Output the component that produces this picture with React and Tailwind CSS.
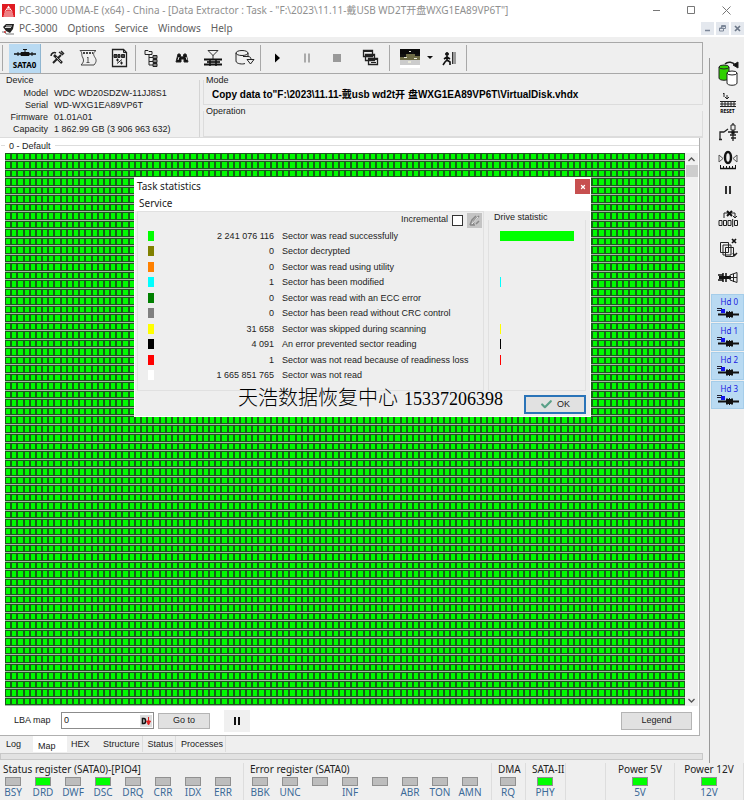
import { Check, X } from "lucide-react";

const COLS = 110;
const ROWS = 65;
const MAP_W = 680;
const MAP_H = 552;

const STATS = [
  { swatch: "bg-[#00ff00]", count: "2 241 076 116", label: "Sector was read successfully", share: 100 },
  { swatch: "bg-[#808000]", count: "0", label: "Sector decrypted", share: 0 },
  { swatch: "bg-[#ff8000]", count: "0", label: "Sector was read using utility", share: 0 },
  { swatch: "bg-[#00ffff]", count: "1", label: "Sector has been modified", share: 2 },
  { swatch: "bg-[#008000]", count: "0", label: "Sector was read with an ECC error", share: 0 },
  { swatch: "bg-[#808080]", count: "0", label: "Sector has been read without CRC control", share: 0 },
  { swatch: "bg-[#ffff00]", count: "31 658", label: "Sector was skipped during scanning", share: 2 },
  { swatch: "bg-black", count: "4 091", label: "An error prevented sector reading", share: 2 },
  { swatch: "bg-[#ff0000]", count: "1", label: "Sector was not read because of readiness loss", share: 2 },
  { swatch: "bg-white", count: "1 665 851 765", label: "Sector was not read", share: 0 },
];

const DEVICE = [
  ["Model", "WDC WD20SDZW-11JJ8S1"],
  ["Serial", "WD-WXG1EA89VP6T"],
  ["Firmware", "01.01A01"],
  ["Capacity", "1 862.99 GB (3 906 963 632)"],
];

const STATUS_BITS = [
  ["BSY", false],
  ["DRD", true],
  ["DWF", false],
  ["DSC", true],
  ["DRQ", false],
  ["CRR", false],
  ["IDX", false],
  ["ERR", false],
];

const ERROR_BITS = [
  ["BBK", false],
  ["UNC", false],
  ["", false],
  ["INF", false],
  ["", false],
  ["ABR", false],
  ["TON", false],
  ["AMN", false],
];

const TABS = [
  { name: "Log", className: "w-[31px] pl-1" },
  { name: "Map", className: "w-[34px] bg-white pt-[2px] pl-[5px]" },
  { name: "HEX", className: "w-[31px] pl-1" },
  { name: "Structure", className: "border-r border-[#ddd] pr-[2px] pl-[5px]" },
  { name: "Status", className: "border-r border-[#ddd] pr-[2px] pl-[5px]" },
  { name: "Processes", className: "border-r border-[#ddd] pr-[2px] pl-[5px]" },
];

function cellPath(inset) {
  let d = "";
  for (let r = 0; r < ROWS; r++) {
    const y0 = Math.round((r * MAP_H) / ROWS);
    const y1 = Math.round(((r + 1) * MAP_H) / ROWS) - 1;
    for (let c = 0; c < COLS; c++) {
      const x0 = Math.round((c * MAP_W) / COLS);
      const x1 = Math.round(((c + 1) * MAP_W) / COLS);
      const w = x1 - x0 - inset * 2;
      const h = y1 - y0 - inset * 2;
      d += `M${x0 + inset} ${y0 + inset}h${w}v${h}h${-w}z`;
    }
  }
  return d;
}

const OUTER = cellPath(0);
const INNER = cellPath(1);

function SectorMap() {
  return (
    <svg
      viewBox={`0 0 ${MAP_W} ${MAP_H}`}
      preserveAspectRatio="none"
      shapeRendering="crispEdges"
      className="h-full w-full"
    >
      <rect width={MAP_W} height={MAP_H} fill="#a9b4a9" />
      <path d={OUTER} fill="#1a5c1a" />
      <path d={INNER} fill="#00fa00" />
    </svg>
  );
}

function Icon({ children, w = 22, h = 22 }) {
  return (
    <svg width={w} height={h} viewBox={`0 0 ${w} ${h}`} fill="none" stroke="#222" strokeWidth="1">
      {children}
    </svg>
  );
}

function ToolButton({ label, children, className = "w-[30px]" }) {
  return (
    <button type="button" aria-label={label} className={`flex h-[29px] shrink-0 items-center justify-center ${className}`}>
      {children}
    </button>
  );
}

function Separator() {
  return <div className="mx-px h-[26px] w-px bg-[#a8a8a8]" />;
}

function Logo() {
  return (
    <svg width="13" height="13" viewBox="0 0 13 13">
      <rect width="13" height="13" fill="#e01b22" />
      <path d="M6.500 1.500 10 7H3z" fill="#fff" />
      <path d="M5 5h3M4 6.500h5" stroke="#e01b22" strokeWidth=".8" />
      <path d="M2.500 8h8M2 10h9M1.500 12h10" stroke="#fff" strokeWidth=".9" />
    </svg>
  );
}

function TitleBar() {
  return (
    <header className="flex h-5 items-center bg-white pl-[2px] text-[#8f8f8f]">
      <Logo />
      <h1 className="ml-1 whitespace-nowrap text-[10px]">
        PC-3000 UDMA-E (x64) - China - [Data Extractor : Task - "F:\2023\11.11-戴USB WD2T开盘WXG1EA89VP6T"]
      </h1>
      <div className="ml-auto flex">
        <button type="button" aria-label="Minimize" className="flex w-[35px] justify-center">
          <Icon w={9} h={9}><path d="M1 4.500h7" stroke="#777" /></Icon>
        </button>
        <button type="button" aria-label="Maximize" className="flex w-[35px] justify-center">
          <Icon w={9} h={9}><path d="M.5 .5h7v7h-7z" stroke="#777" /></Icon>
        </button>
        <button type="button" aria-label="Close" className="flex w-[35px] justify-center">
          <Icon w={9} h={9}><path d="M.5 .5l8 8M8.500 .5l-8 8" stroke="#777" /></Icon>
        </button>
      </div>
    </header>
  );
}

function MenuBar() {
  return (
    <nav className="flex h-[17px] items-center bg-white pl-[2px] text-[10px] text-[#606060]">
      <svg width="13" height="12" viewBox="0 0 13 12">
        <path d="M1 4 4 1h8l-1 5-3 4-4-2z" fill="#222" />
        <path d="M3 4.500h6M4 3h6" stroke="#ddd" />
        <path d="M0 9h3l1 2h8" stroke="#777" fill="none" />
        <circle cx="3" cy="9" r="1" fill="#c33" />
      </svg>
      <div className="ml-1 flex gap-[10px]">
        <button type="button">PC-3000</button>
        <button type="button">Options</button>
        <button type="button">Service</button>
        <button type="button">Windows</button>
        <button type="button">Help</button>
      </div>
      <div className="ml-auto flex gap-[2px]">
        <button type="button" aria-label="Minimize child" className="flex h-[13px] w-[13px] items-center justify-center bg-[#e4e8ee]">
          <Icon w={7} h={7}><path d="M1 5.500h5" stroke="#7c8798" strokeWidth="1.500" /></Icon>
        </button>
        <button type="button" aria-label="Restore child" className="flex h-[13px] w-[13px] items-center justify-center bg-[#e4e8ee]">
          <Icon w={7} h={7}><path d="M2.500 3V.5h4v3H5M.5 3h4v3h-4zM.5 3.500h4M2.500 1.500h4" stroke="#7c8798" /></Icon>
        </button>
        <button type="button" aria-label="Close child" className="flex h-[13px] w-[13px] items-center justify-center bg-[#e4e8ee]">
          <Icon w={7} h={7}><path d="M1 1l5 5M6 1L1 6" stroke="#6c7788" strokeWidth="1.700" /></Icon>
        </button>
      </div>
    </nav>
  );
}

function Toolbar() {
  return (
    <div className="flex h-8 items-center overflow-hidden border border-l-0 border-[#a8a8a8] pl-[2px]">
      <div className="mr-[6px] h-[26px] w-px bg-[#a8a8a8]" />
      <button type="button" className="flex h-[29px] w-8 shrink-0 flex-col items-center justify-center border-r border-[#8fb5d0] bg-[#b9daf2] text-[8px] leading-[9px] font-bold text-black">
        <svg width="22" height="12" viewBox="0 0 22 12">
          <path d="M0 6h22" stroke="#111" strokeWidth="1.500" />
          <path d="M4 4v4M7 4.500h8v3H7zM18 4v4M11 1v3" stroke="#111" fill="#111" />
          <path d="M9 1.500h4" stroke="#111" />
        </svg>
        SATA0
      </button>
      <ToolButton label="Utility" className="w-[31px]">
        <Icon>
          <path d="M8 8l8 8" strokeWidth="2.500" />
          <path d="M15 8 7 16" strokeWidth="2" />
          <path d="M5 9c0-3 3-4 5-3M13 5l4 3M15 4l3 3" strokeWidth="1.500" />
          <path d="M10 10l5 5" stroke="#eee" strokeWidth=".7" />
        </Icon>
      </ToolButton>
      <ToolButton label="Script" className="w-[31px]">
        <Icon>
          <path d="M3 3.500h16c-3 2-3 4-1 7s1 5-1 7.500H4c3-3 3-5 1.500-8C4 8 6 6 3 3.500z" stroke="#444" />
          <path d="M6 6h10" strokeWidth="2" strokeDasharray="2 1" stroke="#444" />
          <path d="M11 10v5M10 10.500h1M9.500 15.500h3" stroke="#555" />
        </Icon>
      </ToolButton>
      <ToolButton label="Sector editor" className="w-[31px]">
        <Icon>
          <path d="M4.500 2.500h11l3 3v14h-14z" strokeWidth="1.300" />
          <path d="M15.500 2.500v3h3" />
          <path d="M6 7.500h3v3H6zM10 7.500h2v3h-2zM13.500 7.500h3v3h-3z" fill="#444" />
          <path d="M9 16.500l5-4" />
          <path d="M9 12h1v2H9zM13 15h1v2h-1z" fill="#222" />
        </Icon>
      </ToolButton>
      <Separator />
      <ToolButton label="Object tree">
        <Icon>
          <path d="M4 3.500h3l1 1h3v3H4zM8 7.500V18h4M8 10.500h4M8 14.500h4" />
          <path d="M12 8.500h4v3h-4zM12 12.500h4v3h-4zM12 16.500h4v3h-4z" fill="#888" />
        </Icon>
      </ToolButton>
      <ToolButton label="Search">
        <Icon w={16} h={16}>
          <path d="M4 4h2l1 3h2l1-3h2l2 8h-4V9H7v3H2z" fill="#111" />
          <path d="M4 10l1-3M12 7l1 3" stroke="#ddd" />
        </Icon>
      </ToolButton>
      <ToolButton label="Compare" className="w-[32px]">
        <Icon>
          <path d="M6 3.500h10l-5 5zM11 8v4" stroke="#333" />
          <path d="M2 12.500h18M2 17.500h18" stroke="#111" strokeWidth="2" />
          <path d="M5 15h13" strokeWidth="2" stroke="#333" />
          <path d="M8 12v7M14 12v7" stroke="#111" strokeWidth="1.500" />
        </Icon>
      </ToolButton>
      <ToolButton label="Copy data">
        <Icon>
          <ellipse cx="9" cy="6" rx="6" ry="2.500" />
          <path d="M3 6v8c0 3 7 3.500 9 2.500M15 6v3M10 9.500h5c2 0 3 1 3 3" />
          <path d="M14 12.500h7l-3.500 4.500z" fill="#eee" />
        </Icon>
      </ToolButton>
      <Separator />
      <ToolButton label="Start">
        <Icon w={8} h={10}><path d="M2 .5v9l5-4.500z" fill="#000" stroke="none" /></Icon>
      </ToolButton>
      <ToolButton label="Pause">
        <Icon w={8} h={10}><path d="M2 .5v9M6 .5v9" stroke="#aaa" strokeWidth="2" /></Icon>
      </ToolButton>
      <ToolButton label="Stop">
        <Icon w={8} h={8}><path d="M0 0h8v8H0z" fill="#999" stroke="none" /></Icon>
      </ToolButton>
      <ToolButton label="Windows" className="w-9">
        <Icon>
          <path d="M4.500 3.500h9v6h-9zM6.500 7.500h9v6h-9zM9.500 11.500h9v6h-9z" fill="#eee" strokeWidth="1.300" />
          <path d="M4 4h10M6 8h10M9 12h10" strokeWidth="2" />
          <path d="M12 15.500h5" />
        </Icon>
      </ToolButton>
      <Separator />
      <ToolButton label="Map view" className="ml-1 w-[30px]">
        <svg width="20" height="19" viewBox="0 0 20 19" shapeRendering="crispEdges">
          <rect width="20" height="19" fill="#fff" />
          <rect width="20" height="6" fill="#0a0a0a" />
          <rect y="5" width="20" height="6" fill="#6d6b45" />
          <path d="M0 5h6v3H0zM12 3h2v2h-2zM15 5h5v2h-5z" fill="#111" />
          <path d="M0 11h20v5H0z" fill="#ccc" />
          <path d="M9 2h2v1H9zM4 8h3v1H4zM14 9h3v1h-3zM8 12h3v2H8z" fill="#e8e8d8" />
        </svg>
      </ToolButton>
      <ToolButton label="Map view options" className="w-[10px]">
        <Icon w={6} h={4}><path d="M0 0h6L3 3z" fill="#111" stroke="none" /></Icon>
      </ToolButton>
      <ToolButton label="Exit">
        <Icon w={18} h={18}>
          <circle cx="6" cy="5" r="1.500" fill="#111" />
          <path d="M6 7v4l3 2v3M6 11l-2 2-2 3M6 8 3 10M6 8l3 2" stroke="#111" strokeWidth="1.600" />
          <path d="M11 3h4v12h-4z" fill="#999" stroke="none" />
          <path d="M11.500 3v12" stroke="#333" />
        </Icon>
      </ToolButton>
      <Separator />
    </div>
  );
}

function InfoPanels() {
  return (
    <div className="flex h-[64px] gap-[3px] border-b border-[#dcdcdc] font-['Liberation_Sans','Noto_Sans_CJK_SC',sans-serif] text-[9px] leading-3 text-[#222]">
      <fieldset className="w-[200px] shrink-0 border-r border-[#d4d4d4]">
        <legend className="ml-[6px]">Device</legend>
        <dl className="grid grid-cols-[48px_1fr] gap-x-[6px] pt-px">
          {DEVICE.map(([name, value]) => (
            <div key={name} className="contents">
              <dt className="text-right">{name}</dt>
              <dd className="whitespace-nowrap">{value}</dd>
            </div>
          ))}
        </dl>
      </fieldset>
      <div className="flex min-w-0 flex-1 flex-col">
        <fieldset className="h-[31px] border border-t-0 border-[#dcdcdc]">
          <legend className="ml-[2px]">Mode</legend>
          <p className="ml-2 truncate pt-[3px] text-[10px] font-bold text-black">
            Copy data to"F:\2023\11.11-戴usb wd2t开 盘WXG1EA89VP6T\VirtualDisk.vhdx
          </p>
        </fieldset>
        <fieldset className="flex-1 border border-t-0 border-[#dcdcdc]">
          <legend className="ml-[2px]">Operation</legend>
        </fieldset>
      </div>
    </div>
  );
}

function TaskDialog() {
  return (
    <section
      role="dialog"
      aria-label="Task statistics"
      className="absolute top-[39px] left-[134px] h-[240px] w-[457px] border border-white bg-[#eee]"
    >
      <div className="flex h-[17px] items-center justify-between bg-white pl-[2px] font-['Noto_Sans',sans-serif] text-[10px] text-[#222]">
        <h2>Task statistics</h2>
        <button type="button" aria-label="Close dialog" className="flex h-[15px] w-[15px] items-center justify-center bg-[#c75050] text-white">
          <X size={6} strokeWidth={5} />
        </button>
      </div>
      <div className="flex h-4 items-center bg-white pl-1 font-['Noto_Sans',sans-serif] text-[10px] text-[#222]">
        <button type="button">Service</button>
      </div>
      <div className="flex h-[180px] gap-1 pr-1 pl-[2px]">
        <div className="flex-1 border border-[#e0e0e0]">
          <div className="flex h-4 items-center justify-end pr-px">
            <label htmlFor="incremental" className="mr-1">Incremental</label>
            <input id="incremental" type="checkbox" className="mr-1 h-[11px] w-[11px] appearance-none border border-[#333] bg-white" />
            <button type="button" aria-label="Reset counters" className="flex h-[15px] w-[15px] items-center justify-center bg-[#c4c4c4]">
              <Icon w={13} h={13}>
                <path d="M2 11l2-5 4-4M5 11l1-4 5-5M2 11h5M8 10l3-3" stroke="#888" strokeWidth="1.500" />
                <path d="M4 10l6-7" stroke="#eee" />
              </Icon>
            </button>
          </div>
          <table className="h-[155px] w-full table-fixed border-collapse leading-3">
            <colgroup>
              <col className="w-[30px]" />
              <col className="w-[106px]" />
              <col />
            </colgroup>
            <tbody>
              {STATS.map((row) => (
                <tr key={row.label}>
                  <td className="p-0 pl-[10px]">
                    <div className={`h-[10px] w-[6px] ${row.swatch}`} />
                  </td>
                  <td className="p-0 text-right">{row.count}</td>
                  <td className="p-0 pl-2 whitespace-nowrap">{row.label}</td>
                </tr>
              ))}
            </tbody>
          </table>
        </div>
        <fieldset className="w-[98px] border-r border-b border-l border-[#e0e0e0]">
          <legend className="ml-1 h-[17px] px-px leading-[13px]">Drive statistic</legend>
          <div className="grid h-[155px] grid-rows-10 items-center pl-[11px]">
            {STATS.map((row) => (
              <div key={row.label} className="w-[74px]">
                <div className={`h-[10px] ${row.swatch}`} style={{ width: `${row.share}%` }} />
              </div>
            ))}
          </div>
        </fieldset>
      </div>
      <div className="flex items-start justify-end pr-1">
        <p className="mr-[21px] flex items-baseline text-black">
          <span className="font-['Noto_Sans_CJK_SC',sans-serif] text-[20px] leading-3 font-light">天浩数据恢复中心</span>
          <span className="ml-[6px] font-['Liberation_Serif',serif] text-[18px] leading-3">15337206398</span>
        </p>
        <button type="button" className="mt-1 flex h-[19px] w-[62px] items-center justify-center gap-1 border-2 border-[#2a74b8] bg-[#e1e1e1]">
          <Check size={13} strokeWidth={4} className="text-[#5aa088]" />
          OK
        </button>
      </div>
    </section>
  );
}

function MapPanel() {
  return (
    <main className="relative flex min-h-0 flex-1 flex-col border-r border-b border-[#b0b0b0] bg-white font-['Liberation_Sans',sans-serif] text-[9px] text-[#222]">
      <div className="flex h-[15px] items-center gap-1 pl-px leading-3">
        <span className="h-px w-1 bg-[#ddd]" />
        0 - Default
        <span className="h-px flex-1 bg-[#ddd]" />
      </div>
      <div className="flex min-h-0 flex-1 pl-[5px]">
        <div className="min-w-0 flex-1">
          <SectorMap />
        </div>
        <div className="mr-px flex w-[13px] flex-col items-center bg-[#f0f0f0]">
          <button type="button" aria-label="Scroll up" className="flex h-3 items-center">
            <Icon w={7} h={5}><path d="M.5 4l3-3 3 3" stroke="#555" strokeWidth="1.300" /></Icon>
          </button>
          <div className="h-3 w-3 bg-[#cdcdcd]" />
          <button type="button" aria-label="Scroll down" className="mt-auto flex h-3 items-center">
            <Icon w={7} h={5}><path d="M.5 1l3 3 3-3" stroke="#555" strokeWidth="1.300" /></Icon>
          </button>
        </div>
      </div>
      <div className="flex h-[29px] items-center pr-[7px] pl-[14px]">
        <label htmlFor="lba" className="w-[47px]">LBA map</label>
        <div className="flex h-[17px] w-[93px] items-center border border-[#8c8c8c] bg-white">
          <input id="lba" type="text" defaultValue="0" className="w-0 flex-1 pl-[2px] outline-none" />
          <button type="button" aria-label="Number base" className="mr-px flex h-3 w-3 items-center justify-center bg-[#ddd]">
            <svg width="10" height="8" viewBox="0 0 10 8">
              <path d="M1.500 1.500h1.500c2 0 2 5 0 5H1.500z" fill="none" stroke="#111" strokeWidth="1.600" />
              <path d="M7.500 0v4M5.500 4h4l-2 4z" stroke="#e02020" fill="#e02020" />
            </svg>
          </button>
        </div>
        <button type="button" className="ml-1 h-4 w-[52px] border border-[#b4b4b4] bg-[#e1e1e1]">Go to</button>
        <button type="button" aria-label="Pause map" className="ml-[14px] flex h-[22px] w-[26px] items-center justify-center bg-[#f0f0f0]">
          <Icon w={8} h={10}><path d="M2 1v8M6 1v8" stroke="#111" strokeWidth="2" /></Icon>
        </button>
        <button type="button" className="ml-auto h-[18px] w-[71px] border border-[#b4b4b4] bg-[#e1e1e1]">Legend</button>
      </div>
      <TaskDialog />
    </main>
  );
}

function TabStrip() {
  return (
    <div role="tablist" className="flex h-[17px] items-start pl-[2px] font-['Liberation_Sans',sans-serif] text-[9px] text-[#222]">
      {TABS.map((tab) => (
        <button
          key={tab.name}
          type="button"
          role="tab"
          aria-selected={tab.name === "Map"}
          className={`h-4 text-left leading-4 ${tab.className}`}
        >
          {tab.name}
        </button>
      ))}
    </div>
  );
}

function Led({ label, on }) {
  return (
    <div className="flex w-[30px] flex-col items-center">
      <div className={`h-[9px] w-4 border border-[#909090] ${on ? "bg-[#00ff00]" : "bg-[#bdbdbd]"}`} />
      <span className="h-[13px] text-[10px] leading-[13px] text-[#3c6a98]">{label}</span>
    </div>
  );
}

function Register({ title, bits, className }) {
  return (
    <section className={`border-r border-[#ddd] ${className}`}>
      <h3 className="h-[14px] text-[10px] leading-[13px] whitespace-nowrap">{title}</h3>
      <div className="flex">
        {bits.map(([label, on], i) => (
          <Led key={i} label={label} on={on} />
        ))}
      </div>
    </section>
  );
}

function StatusBar() {
  return (
    <footer className="flex h-[37px] text-[#222]">
      <Register title={<span className="pl-[5px]">Status register (SATA0)-[PIO4]</span>} bits={STATUS_BITS} className="-ml-[2px] w-[246px]" />
      <Register title={<span className="pl-[5px]">Error register (SATA0)</span>} bits={ERROR_BITS} className="w-[248px] pl-px" />
      <Register title={<span className="pl-[5px]">DMA</span>} bits={[["RQ", false]]} className="w-[34px] pl-px" />
      <Register title={<span className="pl-[2px]">SATA-II</span>} bits={[["PHY", true]]} className="w-[40px] pl-1" />
      <div className="ml-auto flex">
        <Register title="Power 5V" bits={[["5V", true]]} className="flex w-[70px] flex-col items-center border-l" />
        <Register title="Power 12V" bits={[["12V", true]]} className="flex w-[69px] flex-col items-center" />
      </div>
    </footer>
  );
}

function HeadIcon() {
  return (
    <svg width="24" height="12" viewBox="0 0 24 12">
      <path d="M1 1.500h5M1 3.500h6" stroke="#223" />
      <path d="M5 2h4v4H5z" fill="#1414e8" />
      <path d="M2 7.500h21" stroke="#111" strokeWidth="2" />
      <path d="M10 5h7v5h-7z" fill="#111" />
      <path d="M11 4v7M13.500 4v7M16 4v7" stroke="#111" />
    </svg>
  );
}

function SideBar() {
  return (
    <aside className="mt-[21px] flex w-[35px] shrink-0 flex-col border-l border-[#999] pt-px pl-px">
      <ToolButton label="Power" className="w-full">
        <Icon w={24} h={26}>
          <path d="M3 6v11c0 3 10 3 10 0V6z" fill="#2fd000" />
          <ellipse cx="8" cy="6" rx="5" ry="2" fill="#2fd000" />
          <path d="M9 3c3-3 8-2 10 1" strokeWidth="1.500" />
          <path d="M22 1v6l-5-3z" fill="#111" />
          <path d="M11 12v10c0 3 10 3 10 0V12z" fill="#fff" />
          <ellipse cx="16" cy="12" rx="5" ry="2" fill="#fff" />
        </Icon>
      </ToolButton>
      <button type="button" className="flex h-[29px] flex-col items-center justify-center text-[5px] leading-[6px] font-bold text-black">
        <svg width="18" height="16" viewBox="0 0 18 16" fill="none" stroke="#222">
          <path d="M4 2l1-1v4M8 3v4M6 5l2 2 2-2" />
          <path d="M1 9.500h16M1 14.500h16" />
          <path d="M3 10v5M6 10v5M9 10v5M12 10v5M15 10v5M1 12h16" />
        </svg>
        RESET
      </button>
      <ToolButton label="Key" className="w-full">
        <Icon>
          <path d="M3 19v-8h4M2 18.500h3M7 11l4-3M11 11h10M16 2v18M13 14h6M14 17h5" strokeWidth="1.300" />
          <path d="M14 4h4v5h-4z" fill="#eee" />
          <circle cx="16" cy="11.500" r="1.500" fill="#111" />
        </Icon>
      </ToolButton>
      <ToolButton label="Recalibrate" className="w-full">
        <Icon>
          <path d="M2 5v7l4-3.500zM20 5v7l-4-3.500z" stroke="#555" />
          <ellipse cx="11" cy="7.500" rx="3" ry="5.500" stroke="#111" strokeWidth="2.500" />
          <path d="M3 18.500h16" stroke="#111" strokeWidth="1.500" />
          <path d="M3.500 15v4M6.500 16v3M9.500 16v3M12.500 16v3M15.500 16v3M18.500 15v4" stroke="#111" />
        </Icon>
      </ToolButton>
      <ToolButton label="Pause drive" className="w-full">
        <Icon w={8} h={10}><path d="M2 1v8M6 1v8" stroke="#111" strokeWidth="1.700" /></Icon>
      </ToolButton>
      <ToolButton label="Skip sector" className="w-full">
        <Icon>
          <path d="M2 12.500h3v5H2zM6.500 12.500h3v5h-3zM11 12.500h3v5h-3zM17.500 12.500h3v5h-3zM15.700 11v8" />
          <path d="M7 10V5h11v5M16 8l2 2 2-2" />
          <path d="M10 3l5 5M15 3l-5 5" stroke="#111" strokeWidth="2" />
        </Icon>
      </ToolButton>
      <ToolButton label="Cancel copies" className="w-full">
        <Icon>
          <path d="M3.500 5.500h8v10h-8zM6 8h8v10H6zM8.500 10.500h8v9h-8z" fill="#eee" />
          <path d="M15 2l4 4M19 2l-4 4" stroke="#111" strokeWidth="1.700" />
          <path d="M16 16l1.500 2.500L20 16" strokeWidth="1.500" />
        </Icon>
      </ToolButton>
      <ToolButton label="Connector" className="w-full">
        <Icon>
          <path d="M1 9h5M1 14h5" stroke="#111" strokeWidth="1.500" />
          <path d="M6 7v9M9 7v9" stroke="#111" strokeWidth="1.500" />
          <path d="M2 11.500h12" stroke="#111" strokeWidth="3" />
          <path d="M13 9l7-2.500v10L13 14zM13 11.500h7M16.500 8v8" />
        </Icon>
      </ToolButton>
      <div className="mt-[3px] flex flex-col gap-px">
        {[0, 1, 2, 3].map((n) => (
          <button
            key={n}
            type="button"
            className="flex h-7 w-full flex-col items-center justify-center border border-[#a5cdea] bg-[#b9daf2] text-[8px] leading-[10px] text-[#1a1ae0]"
          >
            <span className="self-end pr-[5px]">Hd {n}</span>
            <HeadIcon />
          </button>
        ))}
      </div>
    </aside>
  );
}

export default function App() {
  return (
    <div className="flex h-screen flex-col overflow-hidden bg-[#efefef] font-['Noto_Sans','Noto_Sans_CJK_SC',sans-serif]">
      <TitleBar />
      <MenuBar />
      <div className="flex min-h-0 flex-1">
        <div className="mr-[6px] flex min-w-0 flex-1 flex-col pt-[5px]">
          <Toolbar />
          <InfoPanels />
          <div className="mr-[3px] flex min-h-0 flex-1 flex-col">
            <MapPanel />
          </div>
          <TabStrip />
          <div className="mb-[3px] h-[7px] border border-[#c8c8c8] bg-[#e2e2e2]" />
        </div>
        <SideBar />
      </div>
      <StatusBar />
    </div>
  );
}
